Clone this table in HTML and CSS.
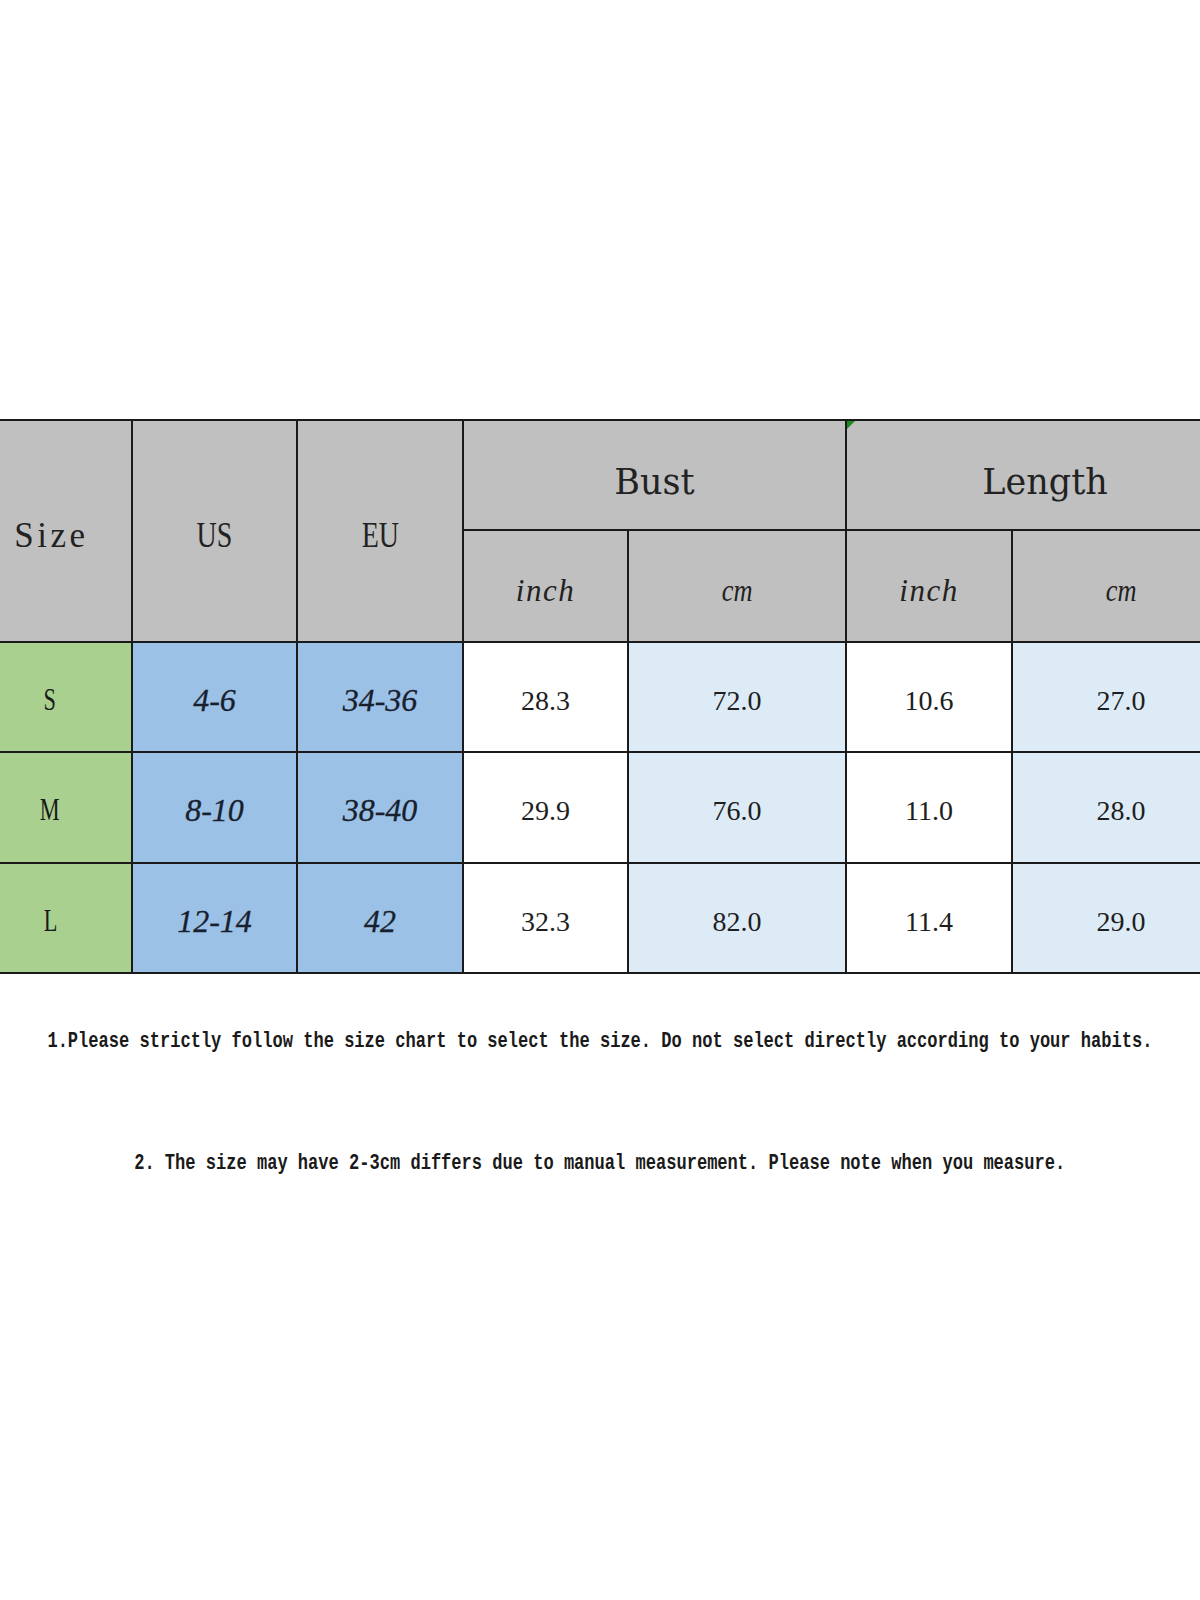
FILE: index.html
```html
<!DOCTYPE html>
<html>
<head>
<meta charset="utf-8">
<link rel="stylesheet" href="styles.css">
</head>
<body>
<div class="page">
  <div class="top-space"></div>
  <table class="chart">
    <colgroup>
      <col class="c-size"><col class="c-us"><col class="c-eu"><col class="c-bi"><col class="c-bc"><col class="c-li"><col class="c-lc">
    </colgroup>
    <tr class="h1">
      <th class="gray label" rowspan="2"><span class="sq wide">Size</span></th>
      <th class="gray label" rowspan="2"><span class="sq">US</span></th>
      <th class="gray label" rowspan="2"><span class="sq">EU</span></th>
      <th class="gray group" colspan="2">Bust</th>
      <th class="gray group flagged" colspan="2">Length</th>
    </tr>
    <tr class="h2">
      <th class="gray unit">inch</th>
      <th class="gray unit"><span class="sq cm">cm</span></th>
      <th class="gray unit">inch</th>
      <th class="gray unit"><span class="sq cm">cm</span></th>
    </tr>
    <tr class="row r1">
      <td class="green sz"><span class="sq">S</span></td>
      <td class="blue it">4-6</td>
      <td class="blue it">34-36</td>
      <td class="white num">28.3</td>
      <td class="light num">72.0</td>
      <td class="white num">10.6</td>
      <td class="light num">27.0</td>
    </tr>
    <tr class="row r2">
      <td class="green sz"><span class="sq">M</span></td>
      <td class="blue it">8-10</td>
      <td class="blue it">38-40</td>
      <td class="white num">29.9</td>
      <td class="light num">76.0</td>
      <td class="white num">11.0</td>
      <td class="light num">28.0</td>
    </tr>
    <tr class="row r3">
      <td class="green sz"><span class="sq">L</span></td>
      <td class="blue it">12-14</td>
      <td class="blue it">42</td>
      <td class="white num">32.3</td>
      <td class="light num">82.0</td>
      <td class="white num">11.4</td>
      <td class="light num">29.0</td>
    </tr>
  </table>
  <div class="note note1"><span class="sq">1.Please strictly follow the size chart to select the size. Do not select directly according to your habits.</span></div>
  <div class="note note2"><span class="sq">2. The size may have 2-3cm differs due to manual measurement. Please note when you measure.</span></div>
</div>
</body>
</html>
```

FILE: styles.css
```css
html, body {
  margin: 0;
  padding: 0;
  background: #ffffff;
}

.page {
  width: 1200px;
  height: 1600px;
  overflow: hidden;
  position: relative;
}

.top-space {
  height: 419px;
}

.chart {
  border-collapse: collapse;
  table-layout: fixed;
  width: 1262px;
  margin-left: -33px;
  color: #1c1c1c;
}

.c-size { width: 164px; }
.c-us { width: 165px; }
.c-eu { width: 166px; }
.c-bi { width: 165px; }
.c-bc { width: 218px; }
.c-li { width: 166px; }
.c-lc { width: 218px; }

.chart th,
.chart td {
  border: 2px solid #1a1a1a;
  padding: 0;
  text-align: center;
  vertical-align: top;
  font-weight: normal;
  line-height: 40px;
}

.h1 { height: 110px; }
.h2 { height: 112px; }
.r1 { height: 110px; }
.r2 { height: 111px; }
.r3 { height: 110px; }

.gray { background: #c0c0c0; }
.green { background: #a9d08e; }
.blue { background: #9bc2e6; }
.light { background: #ddebf7; }
.white { background: #ffffff; }

.sq {
  display: inline-block;
  white-space: nowrap;
}

.label {
  font-family: "Liberation Serif", "Times New Roman", serif;
  font-size: 35px;
  padding-top: 96px;
  color: #222222;
}

.chart .label {
  padding-top: 95px;
}

.label .sq {
  transform: scaleX(0.8);
}

.label .sq.wide {
  transform: none;
  letter-spacing: 3.5px;
  padding-left: 3px;
}

.chart .group {
  font-family: "DejaVu Serif", "Liberation Serif", serif;
  font-size: 35px;
  padding-top: 41px;
  color: #222222;
}

.chart .group.flagged {
  position: relative;
  padding-left: 14px;
}

.flagged::before {
  content: "";
  position: absolute;
  left: 0;
  top: 0;
  width: 0;
  height: 0;
  border-top: 8px solid #1e8a1e;
  border-right: 8px solid transparent;
}

.chart .unit {
  font-family: "Liberation Serif", "Times New Roman", serif;
  font-style: italic;
  font-size: 31px;
  letter-spacing: 1.5px;
  padding-top: 40px;
  color: #222222;
}

.unit .cm {
  letter-spacing: 0;
  transform: scaleX(0.85);
}

.chart .sz {
  font-family: "Liberation Serif", "Times New Roman", serif;
  font-size: 31px;
  padding-top: 37px;
  color: #1a1a1a;
}

.sz .sq {
  transform: scaleX(0.72);
}

.chart .it {
  font-family: "Liberation Serif", "Times New Roman", serif;
  font-style: italic;
  font-size: 32px;
  color: #18202e;
  padding-top: 37px;
  -webkit-text-stroke: 0.3px #18202e;
}

.chart .num {
  font-family: "Liberation Serif", "Times New Roman", serif;
  font-size: 28px;
  color: #1e1e1e;
  padding-top: 38px;
}

.note {
  display: flex;
  justify-content: center;
  width: 1200px;
  font-family: "Liberation Mono", "DejaVu Sans Mono", monospace;
  font-weight: bold;
  font-size: 22px;
  line-height: 24px;
  color: #1a1a1a;
}

.note .sq {
  transform: scaleX(0.775);
}

.note1 {
  margin-top: 56px;
}

.note2 {
  margin-top: 98px;
}
```
